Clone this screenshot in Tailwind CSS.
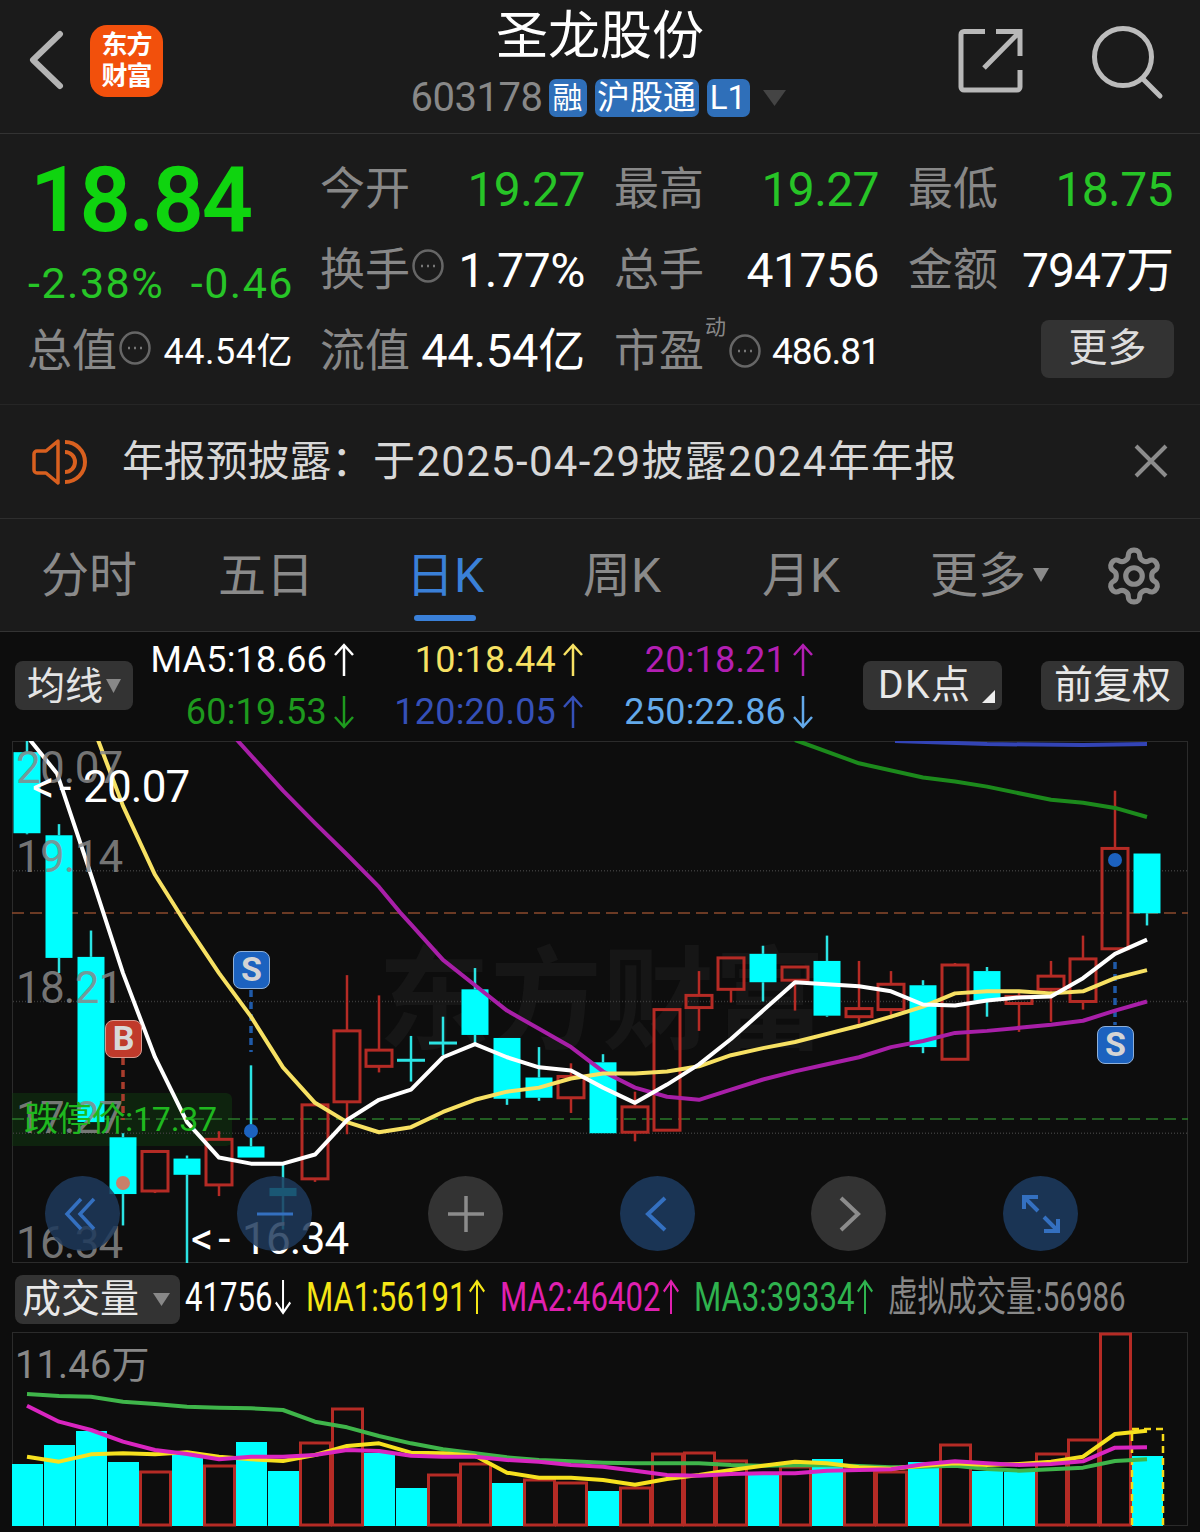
<!DOCTYPE html>
<html lang="zh-CN">
<head>
  <meta charset="UTF-8" />
  <title>圣龙股份</title>
  <script src="https://cdn.jsdelivr.net/npm/@tailwindcss/browser@4"></script>
</head>
<body class="bg-[#0d0d0d] font-['Roboto','Noto_Sans_CJK_SC',sans-serif]">
<div class="w-[1200px] h-[1532px] overflow-hidden relative">

  <!-- Header -->
  <header class="h-[134px] bg-[#1b1b1b] border-b border-[#333] relative flex flex-col items-center">
    <svg class="absolute left-[28px] top-[30px]" width="36" height="60" viewBox="0 0 36 60" fill="none" stroke="#b4b4b4" stroke-width="6" stroke-linecap="round" stroke-linejoin="round"><path d="M32 4 5 30l27 26"/></svg>
    <div class="absolute left-[90px] top-[25px] w-[73px] h-[72px] rounded-[17px] bg-[#f2500c] flex flex-col items-center justify-center text-white text-[26px] leading-[31px] font-bold tracking-[-1px]">
      <span>东方</span><span>财富</span>
    </div>
    <h1 class="text-[52px] leading-[60px] mt-[7px] text-white font-normal">圣龙股份</h1>
    <div class="flex items-center mt-[12px] h-[38px] ml-[-4px]">
      <span class="text-[#888] text-[40px] leading-[38px] tracking-[-0.5px] w-[138px]">603178</span>
      <span class="w-[38px] h-[38px] rounded-[7px] bg-[#2f6fb9] text-white text-[30px] leading-[37px] text-center">融</span>
      <span class="w-[104px] h-[38px] ml-[8px] rounded-[7px] bg-[#2f6fb9] text-white text-[33px] leading-[37px] text-center">沪股通</span>
      <span class="w-[43px] h-[38px] ml-[8px] rounded-[7px] bg-[#2f6fb9] text-white text-[33px] leading-[37px] text-center">L1</span>
      <svg class="ml-[13px]" width="23" height="16" viewBox="0 0 23 16"><path d="M0 0h23L11.500 16z" fill="#444"/></svg>
    </div>
    <svg class="absolute left-[956px] top-[26px]" width="70" height="70" viewBox="0 0 70 70" fill="none" stroke="#b8b8b8" stroke-width="5"><path d="M29 5.500H8a3 3 0 0 0-3 3V61a3 3 0 0 0 3 3h53a3 3 0 0 0 3-3V44M40 5.500h24V30M64 5.500 28 42"/></svg>
    <svg class="absolute left-[1088px] top-[24px]" width="76" height="76" viewBox="0 0 76 76" fill="none" stroke="#bcbcbc" stroke-width="5" stroke-linecap="round"><circle cx="35" cy="33" r="28.500"/><path d="m55 55 17 17"/></svg>
  </header>

  <!-- Quote -->
  <section class="h-[271px] bg-[#1b1b1b] border-b border-[#262626] flex pl-[28px] text-[#888]">
    <div class="w-[265px] shrink-0 relative">
      <div class="text-[#0fd40f] text-[90px] leading-[92px] font-semibold tracking-[-2px] absolute left-[2px] top-[21px]">18.84</div>
      <div class="absolute left-0 right-0 top-[124px] flex justify-between text-[#27c527] text-[43px] leading-[50px] tracking-[1.5px]">
        <span>-2.38%</span><span class="mr-[-1px]">-0.46</span>
      </div>
      <div class="absolute left-[-1px] right-0 top-[193px] flex items-center h-[50px]">
        <span class="text-[45px] leading-[50px]">总值</span>
        <svg class="ml-[2px] mt-[-8px]" width="32" height="34" viewBox="0 0 32 34" fill="none"><ellipse cx="16" cy="17" rx="14.500" ry="15.500" stroke="#666" stroke-width="2.500"/><path d="M9 17h2m4 0h2m4 0h2" stroke="#777" stroke-width="2.500"/></svg>
        <span class="ml-auto text-white text-[36px] leading-[50px] tracking-[0.5px]">44.54亿</span>
      </div>
    </div>
    <div class="ml-[27px] w-[853px] grid grid-cols-[265px_265px_265px] gap-x-[29px] grid-rows-[81px_81px_81px] pt-[15px] h-[258px]">
      <div class="flex items-center justify-between"><span class="text-[45px]">今开</span><span class="text-[#27c527] text-[48px] tracking-[-0.6px]">19.27</span></div>
      <div class="flex items-center justify-between"><span class="text-[45px]">最高</span><span class="text-[#27c527] text-[48px] tracking-[-0.6px]">19.27</span></div>
      <div class="flex items-center justify-between"><span class="text-[45px]">最低</span><span class="text-[#27c527] text-[48px] tracking-[-0.6px]">18.75</span></div>
      <div class="flex items-center"><span class="text-[45px]">换手</span>
        <svg class="ml-[2px] mt-[-9px]" width="32" height="34" viewBox="0 0 32 34" fill="none"><ellipse cx="16" cy="17" rx="14.500" ry="15.500" stroke="#666" stroke-width="2.500"/><path d="M9 17h2m4 0h2m4 0h2" stroke="#777" stroke-width="2.500"/></svg>
        <span class="ml-auto text-white text-[48px] tracking-[-0.4px]">1.77%</span></div>
      <div class="flex items-center justify-between"><span class="text-[45px]">总手</span><span class="text-white text-[48px] tracking-[-0.5px]">41756</span></div>
      <div class="flex items-center justify-between"><span class="text-[45px]">金额</span><span class="text-white text-[48px] tracking-[-1px]">7947万</span></div>
      <div class="flex items-center justify-between"><span class="text-[45px]">流值</span><span class="text-white text-[47px] tracking-[-0.2px]">44.54亿</span></div>
      <div class="flex items-center relative"><span class="text-[45px] shrink-0 whitespace-nowrap">市盈</span>
        <span class="absolute left-[91px] top-[4px] text-[21px] leading-[24px]">动</span>
        <svg class="ml-[25px] mt-[-2px] shrink-0" width="32" height="34" viewBox="0 0 32 34" fill="none"><ellipse cx="16" cy="17" rx="14.500" ry="15.500" stroke="#666" stroke-width="2.500"/><path d="M9 17h2m4 0h2m4 0h2" stroke="#777" stroke-width="2.500"/></svg>
        <span class="ml-[11px] text-white text-[37px] tracking-[-1px]">486.81</span></div>
      <div class="flex items-center justify-end"><span class="w-[133px] h-[58px] mb-[6px] mr-[-1px] rounded-[8px] bg-[#333] text-[#ddd] text-[39px] leading-[56px] text-center">更多</span></div>
    </div>
  </section>

  <!-- Notice -->
  <section class="h-[114px] bg-[#1b1b1b] border-b border-[#2e2e2e] flex items-center pl-[32px] relative">
    <svg width="56" height="48" viewBox="0 0 56 48" fill="none" stroke="#d9601f" stroke-width="3.500" stroke-linejoin="round"><path d="M26 3 14 13H5a3 3 0 0 0-3 3v16a3 3 0 0 0 3 3h9l12 10z"/><path d="M33 14a10 10 0 0 1 0 20M33 4a20 20 0 0 1 0 40" stroke-width="4"/></svg>
    <p class="ml-[34px] text-[#d8d8d8] text-[42px] leading-[50px] tracking-[-0.15px] whitespace-nowrap">年报预披露：<span class="tracking-[1.3px]">于2025-04-29披露2024年年报</span></p>
    <svg class="absolute left-[1134px] top-[39px]" width="34" height="34" viewBox="0 0 34 34" stroke="#8c8c8c" stroke-width="4"><path d="m2 2 30 30M32 2 2 32"/></svg>
  </section>

  <!-- Tabs -->
  <nav class="h-[113px] bg-[#1b1b1b] border-b border-[#333] relative text-[#8a8a8a] text-[48px] leading-[60px]">
    <span class="absolute left-[41px] top-[27px]">分时</span>
    <span class="absolute left-[218px] top-[27px]">五日</span>
    <span class="absolute left-[406px] top-[27px] text-[#3a80d8]">日K</span>
    <span class="absolute left-[414px] top-[96px] w-[62px] h-[6px] rounded-full bg-[#3a80d8]"></span>
    <span class="absolute left-[583px] top-[27px]">周K</span>
    <span class="absolute left-[762px] top-[27px]">月K</span>
    <span class="absolute left-[930px] top-[27px]">更多</span>
    <svg class="absolute left-[1033px] top-[49px]" width="16" height="14" viewBox="0 0 16 14"><path d="M0 0h16L8 14z" fill="#8a8a8a"/></svg>
    <svg class="absolute left-[1103px] top-[26px]" width="62" height="62" viewBox="0 0 24 24" fill="none" stroke="#8a8a8a" stroke-width="2" stroke-linejoin="round"><path d="M12.220 2h-.44a2 2 0 0 0-2 2v.18a2 2 0 0 1-1 1.730l-.43.250a2 2 0 0 1-2 0l-.15-.08a2 2 0 0 0-2.730.730l-.22.380a2 2 0 0 0 .730 2.730l.150.100a2 2 0 0 1 1 1.720v.510a2 2 0 0 1-1 1.740l-.15.090a2 2 0 0 0-.73 2.730l.220.380a2 2 0 0 0 2.730.730l.150-.08a2 2 0 0 1 2 0l.430.250a2 2 0 0 1 1 1.730V20a2 2 0 0 0 2 2h.440a2 2 0 0 0 2-2v-.18a2 2 0 0 1 1-1.730l.430-.25a2 2 0 0 1 2 0l.150.080a2 2 0 0 0 2.730-.73l.220-.39a2 2 0 0 0-.73-2.730l-.15-.08a2 2 0 0 1-1-1.740v-.5a2 2 0 0 1 1-1.740l.150-.09a2 2 0 0 0 .730-2.730l-.22-.38a2 2 0 0 0-2.730-.73l-.15.080a2 2 0 0 1-2 0l-.43-.25a2 2 0 0 1-1-1.730V4a2 2 0 0 0-2-2z"/><circle cx="12" cy="12" r="3.200"/></svg>
  </nav>

  <!-- MA legend -->
  <section class="h-[109px] relative text-[36px] leading-[44px] tracking-[0.2px]">
    <div class="absolute left-[15px] top-[29px] w-[118px] h-[49px] rounded-[8px] bg-[#333] flex items-center pl-[12px] text-[#e4e4e4] text-[38px] tracking-normal">均线
      <svg class="ml-[3px]" width="15" height="14" viewBox="0 0 15 14"><path d="M0 0h15L7.500 14z" fill="#888"/></svg>
    </div>
    <div class="absolute left-[140px] top-[6px] w-[216px] flex justify-end items-center text-white">MA5:18.66<svg class="ml-[5px]" width="24" height="34" viewBox="0 0 24 34" fill="none" stroke="currentColor" stroke-width="2.500"><path d="M12 33V2M3 12l9-10 9 10"/></svg></div>
    <div class="absolute left-[369px] top-[6px] w-[216px] flex justify-end items-center text-[#f7e163]">10:18.44<svg class="ml-[5px]" width="24" height="34" viewBox="0 0 24 34" fill="none" stroke="currentColor" stroke-width="2.500"><path d="M12 33V2M3 12l9-10 9 10"/></svg></div>
    <div class="absolute left-[599px] top-[6px] w-[216px] flex justify-end items-center text-[#b31fb3]">20:18.21<svg class="ml-[5px]" width="24" height="34" viewBox="0 0 24 34" fill="none" stroke="currentColor" stroke-width="2.500"><path d="M12 33V2M3 12l9-10 9 10"/></svg></div>
    <div class="absolute left-[140px] top-[58px] w-[216px] flex justify-end items-center text-[#1e9a1e]">60:19.53<svg class="ml-[5px]" width="24" height="34" viewBox="0 0 24 34" fill="none" stroke="currentColor" stroke-width="2.500"><path d="M12 1v31M3 22l9 10 9-10"/></svg></div>
    <div class="absolute left-[369px] top-[58px] w-[216px] flex justify-end items-center text-[#3550b8]">120:20.05<svg class="ml-[5px]" width="24" height="34" viewBox="0 0 24 34" fill="none" stroke="currentColor" stroke-width="2.500"><path d="M12 33V2M3 12l9-10 9 10"/></svg></div>
    <div class="absolute left-[599px] top-[58px] w-[216px] flex justify-end items-center text-[#63a9ea]">250:22.86<svg class="ml-[5px]" width="24" height="34" viewBox="0 0 24 34" fill="none" stroke="currentColor" stroke-width="2.500"><path d="M12 1v31M3 22l9 10 9-10"/></svg></div>
    <div class="absolute left-[863px] top-[29px] w-[139px] h-[49px] rounded-[8px] bg-[#333] pl-[15px] text-[#e8e8e8] text-[39px] leading-[48px] tracking-[1.5px]">DK点
      <svg class="absolute right-[7px] bottom-[7px]" width="13" height="13" viewBox="0 0 13 13"><path d="M13 0v13H0z" fill="#eee"/></svg>
    </div>
    <div class="absolute left-[1041px] top-[29px] w-[143px] h-[49px] rounded-[8px] bg-[#333] text-center text-[#e8e8e8] text-[39px] leading-[48px] tracking-normal">前复权</div>
  </section>

  <!-- K-line chart -->
  <section class="h-[522px] relative">
    <div class="absolute left-[12px] right-[12px] top-0 bottom-0 border border-[#2b2b2b]"></div>
    <div class="absolute left-[378px] top-[202px] text-[#161616] text-[112px] leading-[120px] font-bold whitespace-nowrap">东方财富</div>
    <div class="absolute left-[12px] top-[352px] w-[220px] h-[53px] rounded-r-[6px] bg-[#0f3a0f]/50"></div>
    <svg id="kline" class="absolute left-0 top-0" width="1200" height="522" viewBox="0 741 1200 522"></svg>
    <span class="absolute left-[16px] top-[2px] text-[#888]/85 text-[44px] leading-[50px] tracking-[-0.8px]">20.07</span>
    <span class="absolute left-[16px] top-[91px] text-[#888]/85 text-[44px] leading-[50px] tracking-[-0.8px]">19.14</span>
    <span class="absolute left-[16px] top-[222px] text-[#888]/85 text-[44px] leading-[50px] tracking-[-0.8px]">18.21</span>
    <span class="absolute left-[16px] top-[352px] text-[#888]/85 text-[44px] leading-[50px] tracking-[-0.8px]">17.27</span>
    <span class="absolute left-[16px] top-[477px] text-[#888]/85 text-[44px] leading-[50px] tracking-[-0.8px]">16.34</span>
    <span class="absolute left-[32px] top-[21px] text-white text-[44px] leading-[50px] tracking-[-0.8px]"><span class="inline-block w-[51px] tracking-[5px]">&lt;-</span>20.07</span>
    <span class="absolute left-[191px] top-[473px] text-white text-[44px] leading-[50px] tracking-[-0.8px]"><span class="inline-block w-[51px] tracking-[5px]">&lt;-</span>16.34</span>
    <span class="absolute left-[24px] top-[352px] text-[#1fb81f] text-[34px] leading-[52px] tracking-[-0.3px]">跌停价:17.37</span>

    <div class="absolute left-[233px] top-[210px] w-[37px] h-[38px] rounded-[8px] bg-[#1c62bf] border border-[#8fb0d8] text-[#d4d4d4] text-[34px] leading-[35px] font-bold text-center">S</div>
    <div class="absolute left-[105px] top-[279px] w-[37px] h-[38px] rounded-[8px] bg-[#c03a2b] border border-[#d89a90] text-[#d8d8d8] text-[34px] leading-[35px] font-bold text-center">B</div>
    <div class="absolute left-[1097px] top-[285px] w-[37px] h-[38px] rounded-[8px] bg-[#1c62bf] border border-[#8fb0d8] text-[#d4d4d4] text-[34px] leading-[35px] font-bold text-center">S</div>

    <!-- Floating chart controls -->
    <div class="absolute left-[45px] top-[435px] w-[75px] h-[75px] rounded-full bg-[#1e3a5c]/85 flex items-center justify-center">
      <svg class="mr-[6px]" width="32" height="36" viewBox="0 0 32 36" fill="none" stroke="#3470c0" stroke-width="3.500"><path d="M17 3 3 18l14 15M30 3 16 18l14 15"/></svg>
    </div>
    <div class="absolute left-[237px] top-[435px] w-[75px] h-[75px] rounded-full bg-[#1e3a5c]/85 flex items-center justify-center">
      <svg width="36" height="6" viewBox="0 0 36 6"><path d="M0 3h36" stroke="#3470c0" stroke-width="3"/></svg>
    </div>
    <div class="absolute left-[428px] top-[435px] w-[75px] h-[75px] rounded-full bg-[#333] flex items-center justify-center">
      <svg width="36" height="36" viewBox="0 0 36 36"><path d="M18 0v36M0 18h36" stroke="#8c8c8c" stroke-width="3.500"/></svg>
    </div>
    <div class="absolute left-[620px] top-[435px] w-[75px] h-[75px] rounded-full bg-[#1a3454] flex items-center justify-center">
      <svg class="mr-[3px]" width="22" height="36" viewBox="0 0 22 36" fill="none" stroke="#3470c0" stroke-width="4"><path d="M20 2 3 18l17 16"/></svg>
    </div>
    <div class="absolute left-[811px] top-[435px] w-[75px] h-[75px] rounded-full bg-[#333] flex items-center justify-center">
      <svg class="ml-[3px]" width="22" height="36" viewBox="0 0 22 36" fill="none" stroke="#8c8c8c" stroke-width="4"><path d="m2 2 17 16L2 34"/></svg>
    </div>
    <div class="absolute left-[1003px] top-[435px] w-[75px] h-[75px] rounded-full bg-[#1a3454] flex items-center justify-center">
      <svg width="38" height="38" viewBox="0 0 38 38" fill="none" stroke="#3470c0" stroke-width="4"><path d="M2 14V2h14M2 2l14 14M36 24v12H22M36 36 22 22"/></svg>
    </div>
  </section>

  <!-- Volume legend -->
  <section class="h-[69px] relative">
    <div class="absolute left-[15px] top-[12px] w-[165px] h-[49px] rounded-[8px] bg-[#333] pl-[7px] text-[#e8e8e8] text-[39px] leading-[47px] flex items-center">成交量
      <svg class="ml-[14px]" width="17" height="13" viewBox="0 0 17 13"><path d="M0 0h17L8.500 13z" fill="#888"/></svg>
    </div>
    <div class="absolute left-[185px] top-[8px] w-[150px] flex items-center origin-left scale-x-[0.76] text-white text-[41px] leading-[52px]">41756<svg class="ml-[1px]" width="26" height="36" viewBox="0 0 24 34" fill="none" stroke="currentColor" stroke-width="2.500"><path d="M12 1v31M3 22l9 10 9-10"/></svg></div>
    <div class="absolute left-[306px] top-[8px] w-[260px] flex items-center origin-left scale-x-[0.76] text-[#f5e616] text-[41px] leading-[52px]">MA1:56191<svg class="ml-[1px]" width="26" height="36" viewBox="0 0 24 34" fill="none" stroke="currentColor" stroke-width="2.500"><path d="M12 33V2M3 12l9-10 9 10"/></svg></div>
    <div class="absolute left-[500px] top-[8px] w-[260px] flex items-center origin-left scale-x-[0.76] text-[#e020b0] text-[41px] leading-[52px]">MA2:46402<svg class="ml-[1px]" width="26" height="36" viewBox="0 0 24 34" fill="none" stroke="currentColor" stroke-width="2.500"><path d="M12 33V2M3 12l9-10 9 10"/></svg></div>
    <div class="absolute left-[694px] top-[8px] w-[260px] flex items-center origin-left scale-x-[0.76] text-[#2fb34f] text-[41px] leading-[52px]">MA3:39334<svg class="ml-[1px]" width="26" height="36" viewBox="0 0 24 34" fill="none" stroke="currentColor" stroke-width="2.500"><path d="M12 33V2M3 12l9-10 9 10"/></svg></div>
    <div class="absolute left-[888px] top-[8px] w-[320px] origin-left scale-x-[0.72] text-[#888] text-[41px] leading-[52px] whitespace-nowrap">虚拟成交量:56986</div>
  </section>

  <!-- Volume chart -->
  <section class="h-[200px] relative">
    <div class="absolute left-[12px] right-[12px] top-0 h-[194px] border border-[#2b2b2b]"></div>
    <svg id="volume" class="absolute left-0 top-0" width="1200" height="200" viewBox="0 1332 1200 200"></svg>
    <span class="absolute left-[15px] top-[10px] text-[#888] text-[38px] leading-[46px] tracking-[0.2px]">11.46万</span>
  </section>
</div>

<script>
  const SVGNS = 'http://www.w3.org/2000/svg';
  const cx = i => 27 + 32 * i;
  // readings came off a slightly squashed zoom, this puts them back on the page
  const ky = v => 740 + (v - 740) * 1.0135;
  const vy = v => 1320 + v / 3;

  function add(svg, tag, attrs) {
    const el = document.createElementNS(SVGNS, tag);
    for (const k in attrs) el.setAttribute(k, attrs[k]);
    svg.appendChild(el);
  }

  const kline = document.getElementById('kline');

  // dotted grid and the two price levels
  [869, 998, 1128].forEach(v => {
    const y = ky(v);
    add(kline, 'line', { x1: 13, x2: 1187, y1: y, y2: y, stroke: '#3a3a3a', 'stroke-width': 1.500, 'stroke-dasharray': '1 2' });
  });
  add(kline, 'line', { x1: 12, x2: 1188, y1: 913, y2: 913, stroke: '#8a4a2c', 'stroke-width': 1.500, 'stroke-dasharray': '12 6' });
  add(kline, 'line', { x1: 12, x2: 1188, y1: 1119, y2: 1119, stroke: '#2a7a2a', 'stroke-width': 1.500, 'stroke-dasharray': '12 6' });

  // high, top, bottom, low, up?
  const candles = [
    [740, 752, 832, 833, 0], [823, 834, 955, 970, 0], [928, 954, 1117, 1117, 0], [1128, 1132, 1188, 1219, 0],
    [1146, 1146, 1185, 1187, 1], [1150, 1153, 1169, 1262, 0], [1126, 1134, 1179, 1190, 1], [1061, 1141, 1152, 1152, 0],
    [1157, 1182, 1190, 1223, 0], [1100, 1100, 1173, 1176, 1], [972, 1027, 1097, 1129, 1], [992, 1046, 1062, 1068, 1],
    [1032, 1056, 1056, 1077, 0], [1013, 1039, 1039, 1051, 0], [965, 986, 1031, 1040, 0], [1034, 1034, 1094, 1100, 0],
    [1043, 1073, 1093, 1096, 0], [1059, 1072, 1093, 1108, 1], [1050, 1058, 1128, 1128, 0], [1087, 1102, 1127, 1136, 1],
    [1006, 1006, 1125, 1125, 1], [968, 992, 1004, 1027, 1], [955, 955, 986, 999, 1], [943, 951, 979, 998, 0],
    [964, 964, 977, 1007, 1], [933, 958, 1012, 1013, 0], [958, 1005, 1013, 1020, 1], [968, 981, 1006, 1015, 1],
    [977, 982, 1043, 1049, 0], [960, 962, 1055, 1055, 1], [964, 968, 997, 1013, 0], [987, 993, 1000, 1028, 1],
    [958, 973, 986, 1018, 1], [933, 956, 998, 1006, 1], [790, 847, 946, 946, 1], [852, 852, 911, 923, 0]
  ];
  candles.forEach((c, i) => {
    const x = cx(i), hi = ky(c[0]), top = ky(c[1]), bot = ky(c[2]), lo = ky(c[3]);
    const col = c[4] ? '#b52b25' : '#2be3e3';
    add(kline, 'line', { x1: x, x2: x, y1: hi, y2: top, stroke: col, 'stroke-width': 2.500 });
    add(kline, 'line', { x1: x, x2: x, y1: bot, y2: lo, stroke: col, 'stroke-width': 2.500 });
    if (c[1] === c[2]) {
      add(kline, 'line', { x1: x - 14, x2: x + 14, y1: top, y2: top, stroke: col, 'stroke-width': 3 });
    } else if (c[4]) {
      add(kline, 'rect', { x: x - 13, y: top, width: 26, height: bot - top, fill: 'none', stroke: col, 'stroke-width': 3 });
    } else {
      add(kline, 'rect', { x: x - 13.500, y: top, width: 27, height: bot - top, fill: '#00ffff' });
    }
  });

  // buy / sell markers
  add(kline, 'line', { x1: 123, x2: 123, y1: 1058, y2: 1120, stroke: '#a83c2c', 'stroke-width': 3.500, 'stroke-dasharray': '7 5' });
  add(kline, 'circle', { cx: 123, cy: 1183, r: 7, fill: '#c8806a' });
  add(kline, 'line', { x1: 251, x2: 251, y1: 990, y2: 1052, stroke: '#1f5aa8', 'stroke-width': 3.500, 'stroke-dasharray': '7 5' });
  add(kline, 'circle', { cx: 251, cy: 1131, r: 7, fill: '#1c62bf' });
  add(kline, 'line', { x1: 1115, x2: 1115, y1: 962, y2: 1025, stroke: '#1f5aa8', 'stroke-width': 3.500, 'stroke-dasharray': '7 5' });
  add(kline, 'circle', { cx: 1115, cy: 860, r: 7, fill: '#1c62bf' });

  function poly(svg, pts, color, w) {
    add(svg, 'polyline', { points: pts.map(p => p.join(',')).join(' '), fill: 'none', stroke: color, 'stroke-width': w, 'stroke-linejoin': 'round' });
  }

  const ma5 = [[30,740],[57,773],[91,873],[123,970],[155,1053],[187,1117],[219,1152],[251,1158],[283,1158],[315,1149],[347,1115],[379,1095],[411,1085],[443,1053],[475,1040],[507,1053],[539,1063],[571,1066],[603,1083],[635,1098],[667,1080],[699,1060],[731,1035],[763,1007],[795,979],[827,981],[859,983],[891,988],[923,1001],[955,1002],[987,997],[1019,994],[1051,993],[1083,975],[1115,951],[1147,937]];
  const ma10 = [[98,740],[123,805],[155,873],[187,923],[219,970],[251,1013],[283,1063],[315,1098],[347,1117],[379,1127],[411,1122],[443,1107],[475,1095],[507,1087],[539,1083],[571,1074],[603,1069],[635,1069],[667,1067],[699,1062],[731,1051],[763,1044],[795,1038],[827,1030],[859,1022],[891,1013],[923,1003],[955,990],[987,988],[1019,988],[1051,990],[1083,988],[1115,975],[1147,967]];
  const ma20 = [[237,740],[283,790],[315,822],[347,853],[379,885],[400,910],[411,922],[443,957],[475,982],[507,1007],[539,1025],[571,1043],[603,1067],[635,1083],[667,1092],[699,1095],[731,1085],[763,1075],[795,1067],[827,1060],[859,1053],[891,1043],[923,1037],[955,1029],[987,1027],[1019,1024],[1051,1021],[1083,1017],[1115,1007],[1147,998]];
  const ma60 = [[795,740],[859,763],[923,777],[955,781],[987,786],[1051,799],[1083,802],[1115,807],[1147,816]];
  const ma120 = [[895,741],[987,744],[1083,745],[1147,744]];
  const fix = pts => pts.map(p => [p[0], ky(p[1])]);
  poly(kline, fix(ma120), '#3344b5', 4);
  poly(kline, fix(ma60), '#1c8a1c', 4);
  poly(kline, fix(ma20), '#a81fa8', 4);
  poly(kline, fix(ma10), '#f7e163', 4);
  poly(kline, fix(ma5), '#ffffff', 4);

  // volume panel
  const volume = document.getElementById('volume');
  const bars = [
    [1464,0],[1445,0],[1431,0],[1462,0],[1472,1],[1455,0],[1466,1],[1442,0],[1471,0],[1443,1],[1409,1],[1453,0],
    [1488,0],[1475,1],[1464,1],[1483,0],[1480,1],[1483,1],[1491,0],[1488,1],[1454,1],[1453,1],[1461,1],[1474,0],
    [1467,1],[1459,0],[1470,1],[1472,1],[1462,0],[1445,1],[1471,0],[1472,0],[1454,1],[1440,1],[1334,1],[1456,0]
  ];
  bars.forEach((b, i) => {
    const x = cx(i), top = b[0];
    if (b[1]) add(volume, 'rect', { x: x - 14.500, y: top, width: 30, height: 1525 - top, fill: 'none', stroke: '#b52b25', 'stroke-width': 3 });
    else add(volume, 'rect', { x: x - 15, y: top, width: 31, height: 1526 - top, fill: '#00ffff' });
  });
  add(volume, 'path', { d: 'M1132 1525V1429h31v96', fill: 'none', stroke: '#f5d918', 'stroke-width': 2.500, 'stroke-dasharray': '7 5' });

  const series = (vals) => vals.map((v, i) => [cx(i), vy(v)]);
  poly(volume, series([222,228,230,245,252,260,263,265,270,305,322,348,370,388,400,412,420,424,428,430,430,430,435,437,436,435,438,442,440,437,447,452,448,443,423,418]), '#3fb54a', 4);
  poly(volume, series([410,425,403,400,403,397,410,418,423,405,378,370,398,400,407,458,473,473,480,494,477,465,450,437,425,430,442,446,437,430,435,432,425,410,342,332]), '#f7e11f', 4);
  poly(volume, series([257,305,330,365,390,402,418,410,410,405,390,393,407,410,410,420,425,435,440,452,465,467,462,460,460,452,450,448,433,424,430,435,432,424,383,382]), '#d925c0', 4);
</script>
</body>
</html>
